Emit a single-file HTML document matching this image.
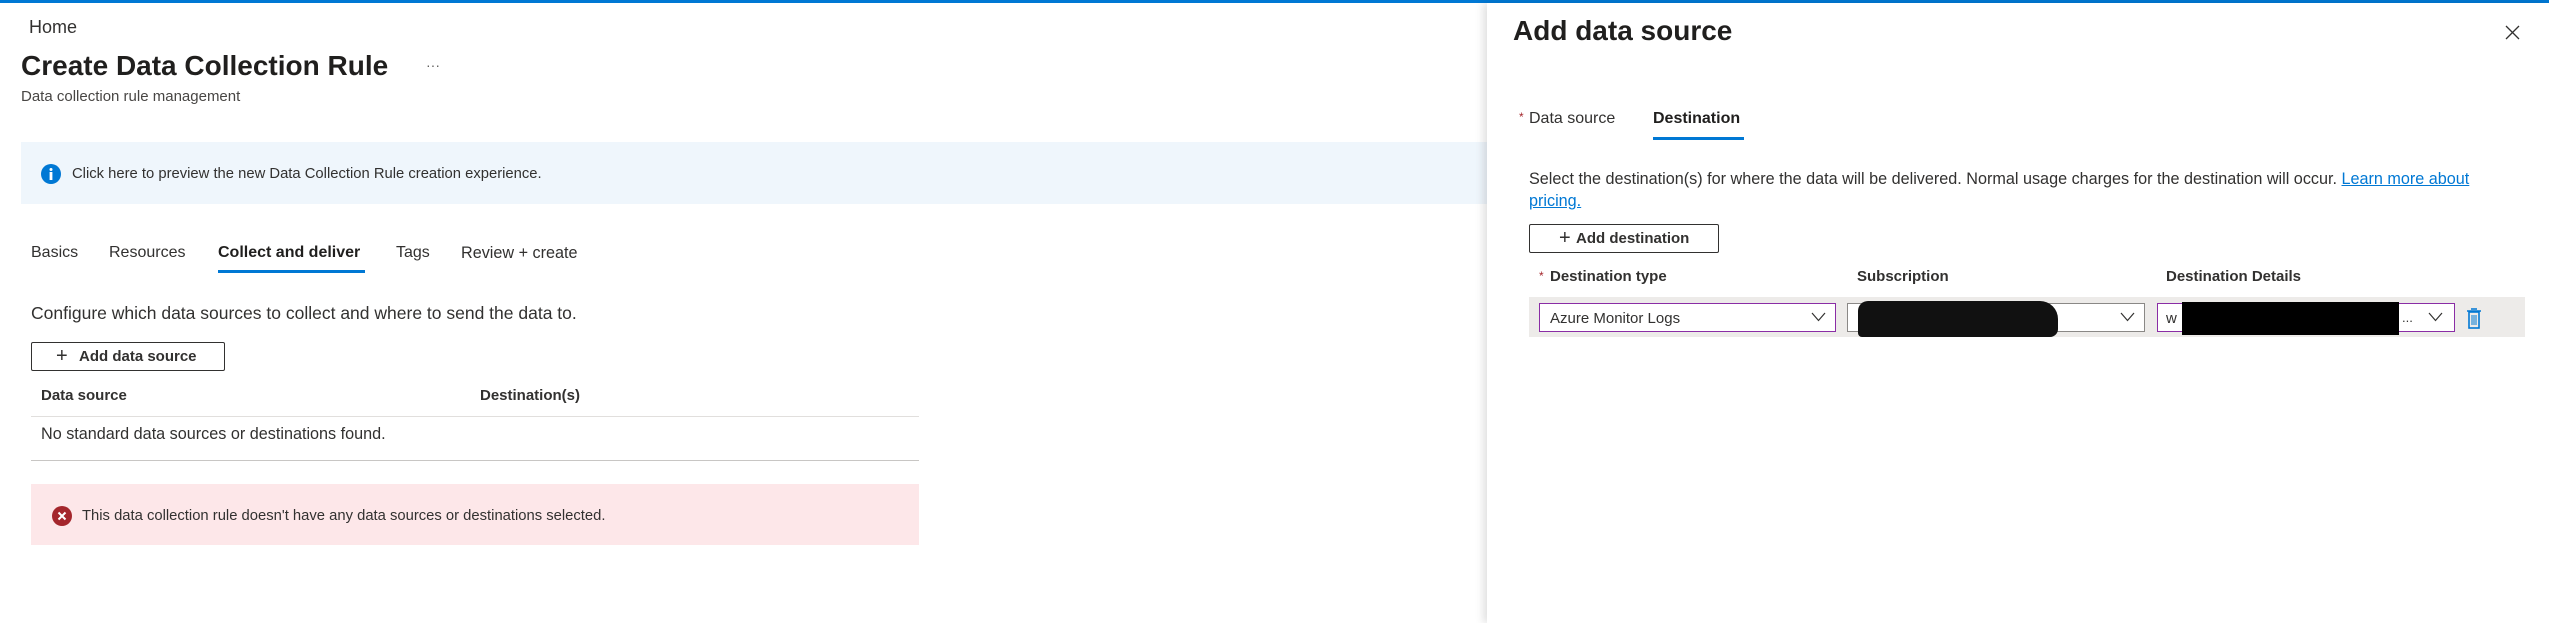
<!DOCTYPE html>
<html><head><meta charset="utf-8"><style>
*{margin:0;padding:0;box-sizing:border-box}
body{width:2549px;height:623px;position:relative;overflow:hidden;background:#fff;font-family:"Liberation Sans",sans-serif;color:#323130}
.a{position:absolute;white-space:nowrap;line-height:1}
.b{font-weight:bold}
</style></head><body>
<div class="a" style="left:0;top:0;width:2549px;height:3px;background:#0078d4"></div>

<div class="a" style="left:29px;top:18px;font-size:18px">Home</div>
<div class="a b" style="left:21px;top:52px;font-size:28px;color:#201f1e">Create Data Collection Rule</div>
<div class="a" style="left:426px;top:58px;font-size:14px;color:#605e5c">···</div>
<div class="a" style="left:21px;top:89px;font-size:15px;color:#484644">Data collection rule management</div>

<div class="a" style="left:21px;top:142px;width:1470px;height:62px;background:#eff6fc"></div>
<svg class="a" style="left:41px;top:164px" width="20" height="20" viewBox="0 0 20 20"><circle cx="10" cy="10" r="10" fill="#0078d4"/><circle cx="10" cy="5.5" r="1.5" fill="#fff"/><rect x="8.6" y="8" width="2.8" height="8" fill="#fff"/></svg>
<div class="a" style="left:72px;top:167px;font-size:14.8px">Click here to preview the new Data Collection Rule creation experience.</div>

<div class="a" style="left:31px;top:245px;font-size:16px">Basics</div>
<div class="a" style="left:109px;top:245px;font-size:16px">Resources</div>
<div class="a b" style="left:218px;top:245px;font-size:16px;color:#201f1e">Collect and deliver</div>
<div class="a" style="left:396px;top:245px;font-size:16px">Tags</div>
<div class="a" style="left:461px;top:245px;font-size:16.2px">Review + create</div>
<div class="a" style="left:218px;top:270px;width:147px;height:3px;background:#0078d4"></div>

<div class="a" style="left:31px;top:305px;font-size:17.5px">Configure which data sources to collect and where to send the data to.</div>

<div class="a" style="left:31px;top:342px;width:194px;height:29px;border:1px solid #323130;border-radius:2px"></div>
<div class="a" style="left:56px;top:346px;font-size:20px;font-weight:300">+</div>
<div class="a b" style="left:79px;top:349px;font-size:15px">Add data source</div>

<div class="a b" style="left:41px;top:388px;font-size:15px">Data source</div>
<div class="a b" style="left:480px;top:388px;font-size:15px">Destination(s)</div>
<div class="a" style="left:31px;top:416px;width:888px;height:1px;background:#e1dfdd"></div>
<div class="a" style="left:41px;top:426px;font-size:16.2px">No standard data sources or destinations found.</div>
<div class="a" style="left:31px;top:460px;width:888px;height:1px;background:#c8c6c4"></div>

<div class="a" style="left:31px;top:484px;width:888px;height:61px;background:#fde7e9"></div>
<svg class="a" style="left:52px;top:506px" width="20" height="20" viewBox="0 0 20 20"><circle cx="10" cy="10" r="10" fill="#a4262c"/><path d="M6.5 6.5L13.5 13.5M13.5 6.5L6.5 13.5" stroke="#fff" stroke-width="2"/></svg>
<div class="a" style="left:82px;top:509px;font-size:14.8px">This data collection rule doesn't have any data sources or destinations selected.</div>

<!-- panel -->
<div class="a" style="left:1487px;top:3px;width:1062px;height:620px;background:#fff;box-shadow:-4px 0 8px rgba(0,0,0,0.12)"></div>
<div class="a b" style="left:1513px;top:17px;font-size:28px;color:#201f1e">Add data source</div>
<svg class="a" style="left:2505px;top:25px" width="15" height="15" viewBox="0 0 15 15"><path d="M1 1L14 14M14 1L1 14" stroke="#323130" stroke-width="1.3"/></svg>

<div class="a" style="left:1519px;top:111px;font-size:12px;color:#a4262c">*</div>
<div class="a" style="left:1529px;top:111px;font-size:16px">Data source</div>
<div class="a b" style="left:1653px;top:111px;font-size:16px;color:#201f1e">Destination</div>
<div class="a" style="left:1653px;top:137px;width:91px;height:3px;background:#0078d4"></div>

<div class="a" style="left:1529px;top:168px;font-size:16.2px;line-height:22px">Select the destination(s) for where the data will be delivered. Normal usage charges for the destination will occur. <span style="color:#0078d4;text-decoration:underline">Learn more about</span><br><span style="color:#0078d4;text-decoration:underline">pricing.</span></div>

<div class="a" style="left:1529px;top:224px;width:190px;height:29px;border:1px solid #323130;border-radius:2px"></div>
<div class="a" style="left:1559px;top:228px;font-size:20px;font-weight:300">+</div>
<div class="a b" style="left:1576px;top:231px;font-size:15px">Add destination</div>

<div class="a" style="left:1539px;top:270px;font-size:12px;color:#a4262c">*</div>
<div class="a b" style="left:1550px;top:269px;font-size:15px">Destination type</div>
<div class="a b" style="left:1857px;top:269px;font-size:15px">Subscription</div>
<div class="a b" style="left:2166px;top:269px;font-size:15px">Destination Details</div>

<div class="a" style="left:1529px;top:297px;width:996px;height:40px;background:#edebe9"></div>
<div class="a" style="left:1539px;top:303px;width:297px;height:29px;border:1px solid #8a2da5;background:#fff"></div>
<div class="a" style="left:1550px;top:311px;font-size:15px">Azure Monitor Logs</div>
<svg class="a" style="left:1811px;top:312px" width="15" height="10" viewBox="0 0 15 10"><path d="M1 1L7.5 8.5L14 1" fill="none" stroke="#323130" stroke-width="1.2"/></svg>

<div class="a" style="left:1847px;top:303px;width:298px;height:29px;border:1px solid #8a8886;background:#fff"></div>
<div class="a" style="left:1858px;top:301px;width:200px;height:36px;background:#111;border-radius:10px 18px 8px 4px"></div>
<svg class="a" style="left:2120px;top:312px" width="15" height="10" viewBox="0 0 15 10"><path d="M1 1L7.5 8.5L14 1" fill="none" stroke="#323130" stroke-width="1.2"/></svg>

<div class="a" style="left:2157px;top:303px;width:298px;height:29px;border:1px solid #8a2da5;background:#fff"></div>
<div class="a" style="left:2166px;top:311px;font-size:15px">w</div>
<div class="a" style="left:2182px;top:302px;width:217px;height:33px;background:#000"></div>
<div class="a" style="left:2402px;top:311px;font-size:13px">...</div>
<svg class="a" style="left:2428px;top:312px" width="15" height="10" viewBox="0 0 15 10"><path d="M1 1L7.5 8.5L14 1" fill="none" stroke="#323130" stroke-width="1.2"/></svg>

<svg class="a" style="left:2466px;top:307px" width="16" height="22" viewBox="0 0 16 22"><path d="M5 2h6M1 4h14" stroke="#0078d4" stroke-width="1.6"/><rect x="3" y="5" width="10" height="16" fill="none" stroke="#0078d4" stroke-width="1.6"/><path d="M6 8v10M8 8v10M10 8v10" stroke="#0078d4" stroke-width="1"/></svg>
</body></html>
